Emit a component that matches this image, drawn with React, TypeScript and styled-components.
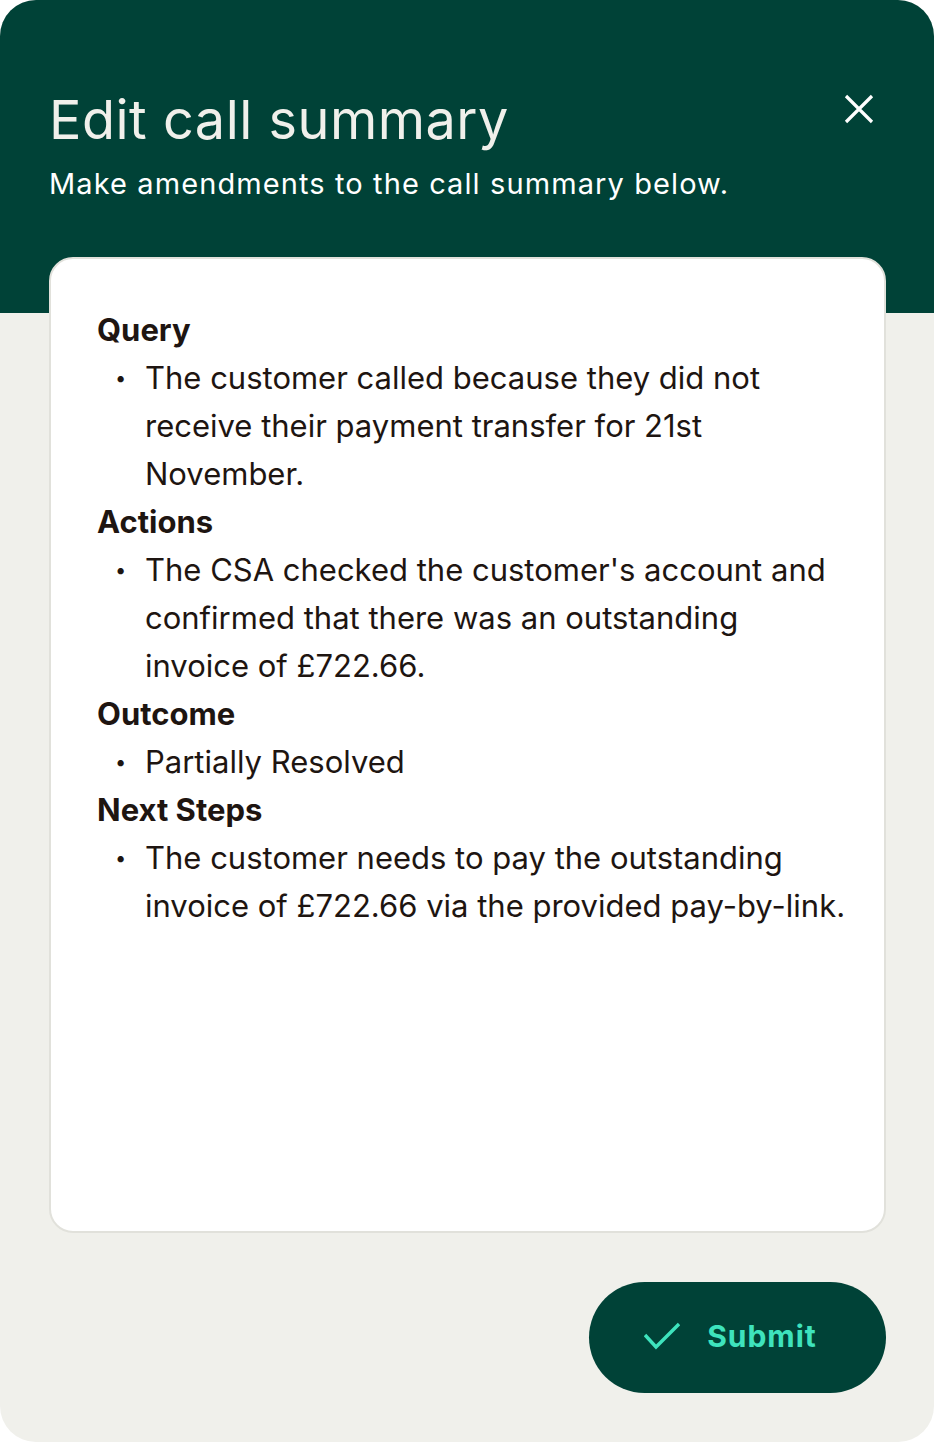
import React from "react";
import styled, { createGlobalStyle } from "styled-components";

const Global = createGlobalStyle`
  html, body { margin: 0; padding: 0; background: #ffffff; }
  *, *::before, *::after { box-sizing: border-box; }
  body { font-family: Inter, "Noto Sans", sans-serif; }
`;

const Modal = styled.div`
  width: 934px;
  height: 1442px;
  border-radius: 36px;
  overflow: hidden;
  background: #f0f0eb;
  display: flex;
  flex-direction: column;
`;

const Header = styled.header`
  background: #004237;
  height: 313px;
  padding: 87px 48px 0 49px;
  display: flex;
  justify-content: space-between;
  align-items: flex-start;
`;

const Titles = styled.div`
  display: flex;
  flex-direction: column;
  gap: 13px;
`;

const Title = styled.h1`
  margin: 0;
  font-size: 54px;
  font-weight: 400;
  line-height: 66px;
  color: #f0f0eb;
  letter-spacing: 0.5px;
`;

const Subtitle = styled.p`
  margin: 0;
  font-size: 29px;
  line-height: 36px;
  letter-spacing: 1.1px;
  color: #ffffff;
`;

const CloseButton = styled.button`
  background: none;
  border: none;
  padding: 0;
  margin: 7px 12px 0 0;
  width: 30px;
  height: 30px;
  cursor: pointer;
  display: flex;
`;

const Body = styled.div`
  flex: 1;
  padding: 0 48px 48px 49px;
  display: flex;
  flex-direction: column;
`;

const Card = styled.div`
  margin-top: -56px;
  height: 976px;
  background: #ffffff;
  border: 2px solid #e1e1db;
  border-radius: 24px;
  padding: 47px 35px 40px 46px;
  color: #1e1511;
`;

const SectionTitle = styled.h2`
  margin: 0;
  font-size: 31px;
  font-weight: 700;
  line-height: 48px;
`;

const List = styled.ul`
  margin: 0;
  padding: 0;
  list-style: none;
`;

const Item = styled.li`
  display: flex;
  font-size: 31px;
  line-height: 48px;
  &::before {
    content: "•";
    width: 48px;
    padding-left: 18px;
    flex-shrink: 0;
    font-size: 20px;
  }
`;

const Footer = styled.div`
  display: flex;
  justify-content: flex-end;
  margin-top: 49px;
`;

const SubmitButton = styled.button`
  width: 297px;
  height: 111px;
  border-radius: 56px;
  border: none;
  background: #004237;
  color: #3ee3bd;
  font-family: Inter, sans-serif;
  font-size: 30px;
  font-weight: 700;
  letter-spacing: 1px;
  display: flex;
  align-items: center;
  justify-content: center;
  gap: 27px;
  padding: 0 14px 4px 0;
`;

const sections = [
  {
    title: "Query",
    items: [
      "The customer called because they did not receive their payment transfer for 21st November.",
    ],
  },
  {
    title: "Actions",
    items: [
      "The CSA checked the customer's account and confirmed that there was an outstanding invoice of £722.66.",
    ],
  },
  { title: "Outcome", items: ["Partially Resolved"] },
  {
    title: "Next Steps",
    items: [
      "The customer needs to pay the outstanding invoice of £722.66 via the provided pay-by-link.",
    ],
  },
];

export default function App() {
  return (
    <>
      <Global />
      <Modal>
        <Header>
          <Titles>
            <Title>Edit call summary</Title>
            <Subtitle>Make amendments to the call summary below.</Subtitle>
          </Titles>
          <CloseButton aria-label="Close">
            <svg width="30" height="30" viewBox="0 0 30 30">
              <path d="M2 2 L28 28 M28 2 L2 28" stroke="#ffffff" strokeWidth="3.2" />
            </svg>
          </CloseButton>
        </Header>
        <Body>
          <Card>
            {sections.map((s) => (
              <section key={s.title}>
                <SectionTitle>{s.title}</SectionTitle>
                <List>
                  {s.items.map((t) => (
                    <Item key={t}>{t}</Item>
                  ))}
                </List>
              </section>
            ))}
          </Card>
          <Footer>
            <SubmitButton>
              <svg width="36" height="28" viewBox="0 0 36 28">
                <path d="M1 13 L12 25 L35 2" fill="none" stroke="#3ee3bd" strokeWidth="3.4" />
              </svg>
              Submit
            </SubmitButton>
          </Footer>
        </Body>
      </Modal>
    </>
  );
}
